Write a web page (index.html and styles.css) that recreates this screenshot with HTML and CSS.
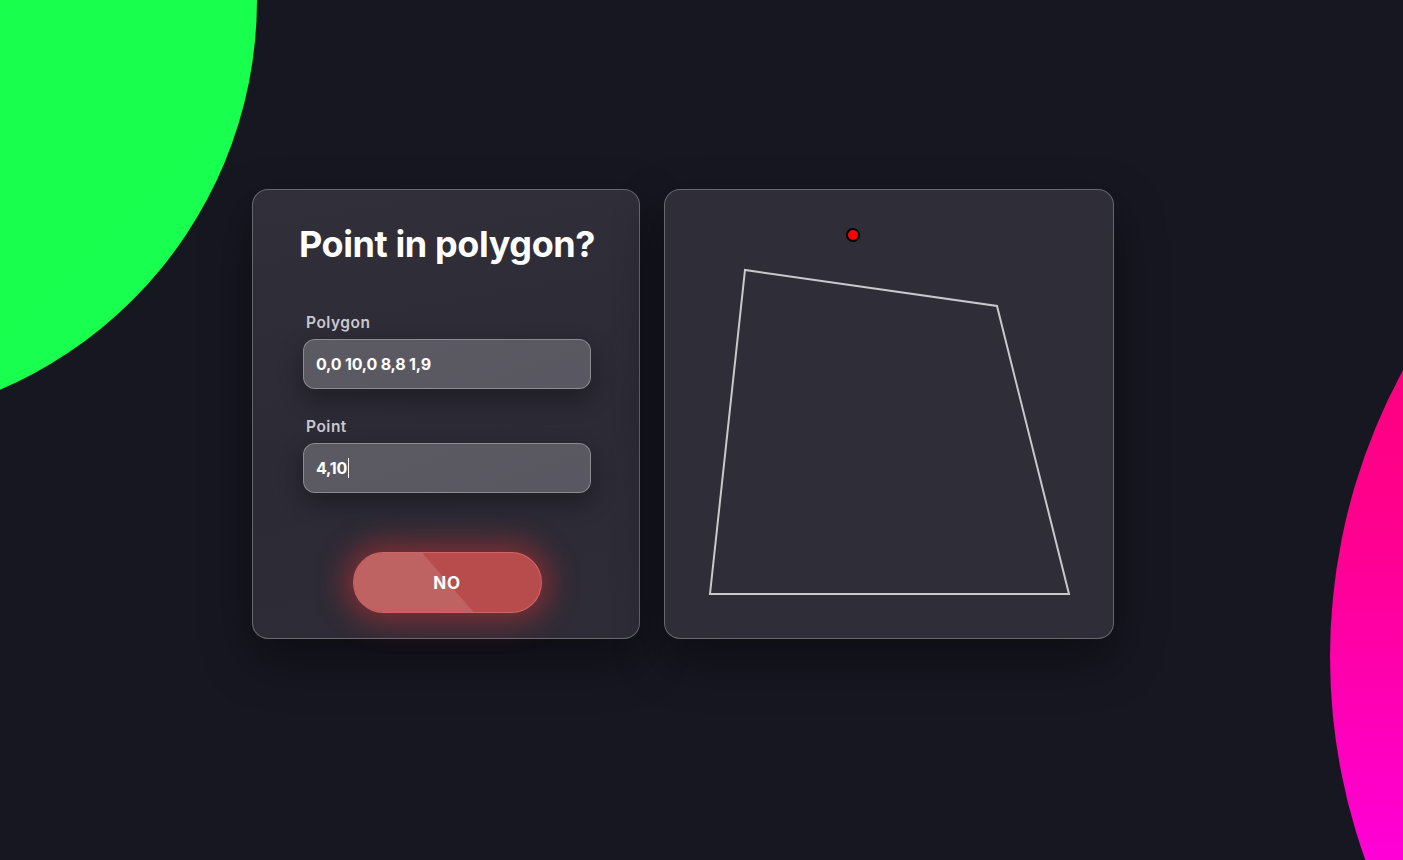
FILE: index.html
```html
<!DOCTYPE html>
<html lang="en">
<head>
<meta charset="utf-8">
<title>Point in polygon?</title>
<link rel="stylesheet" href="styles.css">
</head>
<body>
  <div class="backdrop">
    <div class="blob blob-green"></div>
    <div class="blob blob-pink"></div>
  </div>
  <main class="stage">
    <section class="card form-card">
      <h1 class="title">Point in polygon?</h1>
      <div class="field">
        <label class="label" for="poly">Polygon</label>
        <div class="input" id="poly">0,0 10,0 8,8 1,9</div>
      </div>
      <div class="field">
        <label class="label" for="pt">Point</label>
        <div class="input" id="pt">4,10<span class="caret"></span></div>
      </div>
      <div class="actions">
        <button class="result-btn"><span class="shine"></span><span class="btn-text">NO</span></button>
      </div>
    </section>
    <section class="card canvas-card">
      <svg class="plot" width="450" height="450" viewBox="0 0 450 450">
        <polygon points="46,405 405,405 333,117 81,81" fill="none" stroke="#c9c8cc" stroke-width="2"/>
        <circle cx="189" cy="46" r="6" fill="#ff0000" stroke="#000" stroke-width="2"/>
      </svg>
    </section>
  </main>
</body>
</html>
```
FILE: styles.css
```css
* { box-sizing: border-box; }
html, body {
  margin: 0;
  padding: 0;
  width: 1403px;
  height: 860px;
  overflow: hidden;
  background: #171722;
  font-family: Inter, "Open Sans", "Liberation Sans", sans-serif;
  color: #fff;
  position: relative;
}
.backdrop {
  position: absolute;
  inset: 0;
  overflow: hidden;
}
.blob {
  position: absolute;
  border-radius: 50%;
}
.blob-green {
  width: 848px;
  height: 848px;
  left: -591px;
  top: -424px;
  background: linear-gradient(135deg, #1aff48, #18ff50);
}
.blob-pink {
  width: 1200px;
  height: 1200px;
  left: 1330px;
  top: 57px;
  background: linear-gradient(180deg, #ff0060 0%, #ff0090 40%, #ff00e0 70%, #ff00ff 100%);
}
.stage {
  position: relative;
  display: flex;
  gap: 24px;
  padding: 189px 0 0 252px;
}
.card {
  height: 450px;
  border-radius: 16px;
  border: 1px solid rgba(255,255,255,0.28);
  background: #2e2d38;
  box-shadow: 0 20px 50px rgba(0,0,0,0.45);
}
.form-card {
  width: 388px;
  padding: 0 48px 0 50px;
  background: linear-gradient(170deg, #302f3a 0%, #2b2a35 55%, #2e2c37 100%);
  display: flex;
  flex-direction: column;
}
.title {
  margin: 32px -30px 0 -30px;
  text-align: center;
  white-space: nowrap;
  font-size: 36px;
  font-weight: 700;
  letter-spacing: -0.4px;
  line-height: 44px;
  color: #ffffff;
}
.field {
  display: flex;
  flex-direction: column;
}
.title + .field { margin-top: 46px; }
.field + .field { margin-top: 27px; }
.label {
  font-size: 15.5px;
  font-weight: 600;
  color: #c9c8d0;
  padding-left: 3px;
  line-height: 22px;
  letter-spacing: 0.5px;
  margin-bottom: 5px;
}
.input {
  height: 50px;
  border-radius: 12px;
  background: linear-gradient(160deg, #5b5a63, #595862);
  border: 1px solid rgba(255,255,255,0.3);
  box-shadow: 0 10px 24px rgba(0,0,0,0.3);
  padding: 0 12px;
  display: flex;
  align-items: center;
  font-size: 16px;
  font-weight: 700;
  color: #ffffff;
  letter-spacing: -0.2px;
}
.caret {
  display: inline-block;
  width: 1px;
  height: 20px;
  background: #ffffff;
  margin-left: 1px;
}
.actions {
  display: flex;
  justify-content: center;
  margin-top: 59px;
}
.result-btn {
  position: relative;
  width: 189px;
  height: 61px;
  border-radius: 31px;
  border: 1px solid rgba(255,170,170,0.3);
  background: #b84b4b;
  overflow: hidden;
  box-shadow: 0 0 30px 8px rgba(230,50,50,0.48);
  font-family: inherit;
  font-size: 17px;
  font-weight: 700;
  letter-spacing: 0.6px;
  color: #ffffff;
  cursor: pointer;
  padding: 0;
}
.shine {
  position: absolute;
  top: 0;
  bottom: 0;
  left: 0;
  width: 100%;
  background: #bf6262;
  clip-path: polygon(0 0, 69px 0, 120px 100%, 0 100%);
}
.btn-text { position: relative; }
.canvas-card {
  width: 450px;
  background: #2e2d38;
  overflow: hidden;
}
.plot {
  display: block;
  margin: -1px;
}
```
